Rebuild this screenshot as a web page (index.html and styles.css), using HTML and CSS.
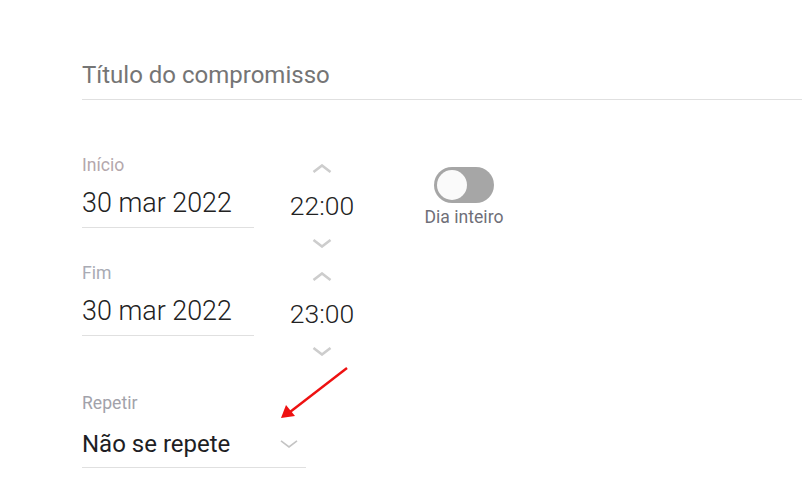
FILE: index.html
```html
<!DOCTYPE html>
<html lang="pt">
<head>
<meta charset="utf-8">
<link rel="stylesheet" href="styles.css">
</head>
<body>
<div class="page">
  <div class="title-field">Título do compromisso</div>

  <div class="when">
    <div class="range">
      <div class="row">
        <div class="date-field">
          <div class="label">Início</div>
          <div class="date">30 mar 2022</div>
        </div>
        <div class="time">
          <svg class="chev" viewBox="0 0 20 9" width="20" height="9"><path d="M1.5 8 L10 1.5 L18.5 8" fill="none" stroke="#cdcdcd" stroke-width="2.6"/></svg>
          <div class="time-value">22:00</div>
          <svg class="chev" viewBox="0 0 20 9" width="20" height="9"><path d="M1.5 1 L10 7.5 L18.5 1" fill="none" stroke="#cdcdcd" stroke-width="2.6"/></svg>
        </div>
      </div>
      <div class="row row2">
        <div class="date-field">
          <div class="label">Fim</div>
          <div class="date">30 mar 2022</div>
        </div>
        <div class="time">
          <svg class="chev" viewBox="0 0 20 9" width="20" height="9"><path d="M1.5 8 L10 1.5 L18.5 8" fill="none" stroke="#cdcdcd" stroke-width="2.6"/></svg>
          <div class="time-value">23:00</div>
          <svg class="chev" viewBox="0 0 20 9" width="20" height="9"><path d="M1.5 1 L10 7.5 L18.5 1" fill="none" stroke="#cdcdcd" stroke-width="2.6"/></svg>
        </div>
      </div>
    </div>
    <div class="allday">
      <div class="switch"><div class="knob"></div></div>
      <div class="allday-label">Dia inteiro</div>
    </div>
  </div>

  <div class="repeat">
    <div class="label">Repetir</div>
    <div class="select">
      <span>Não se repete</span>
      <svg class="chev small" viewBox="0 0 18 8" width="18" height="8"><path d="M1 0.8 L9 7 L17 0.8" fill="none" stroke="#c4c4c4" stroke-width="1.6"/></svg>
    </div>
  </div>

  <svg class="arrow" width="80" height="60" viewBox="0 0 80 60">
    <line x1="71" y1="2" x2="14" y2="46" stroke="#ee1111" stroke-width="2.4"/>
    <polygon points="5,52 10,39 19,50" fill="#ee1111"/>
  </svg>
</div>
</body>
</html>
```

FILE: styles.css
```css
* { box-sizing: border-box; }
html, body { margin: 0; padding: 0; background: #fff; }
body { font-family: Roboto, "Noto Sans", sans-serif; }
.page {
  position: relative;
  padding: 58px 0 0 82px;
  width: 802px;
  height: 491px;
  overflow: hidden;
}
.title-field {
  font-size: 24px;
  line-height: 34px;
  color: #757575;
  height: 42px;
  border-bottom: 1px solid #e0e0e0;
}
.when {
  display: flex;
  margin-top: 53px;
}
.range { display: flex; flex-direction: column; }
.row { display: flex; height: 108px; }
.date-field { width: 172px; }
.label {
  font-size: 17.6px;
  line-height: 24px;
  color: #9e9e9e;
}
.when .label { color: #b4a7ac; }
.row2 .label { color: #a9abb4; }
.date {
  margin-top: 11px;
  font-size: 26.9px;
  font-weight: 300;
  line-height: 30px;
  color: #222;
  height: 40px;
  border-bottom: 1px solid #e0e0e0;
}
.time {
  width: 64px;
  margin-left: 36px;
  display: flex;
  flex-direction: column;
  align-items: center;
}
.chev { display: block; }
.time .chev:first-child { margin-top: 11px; }
.time-value {
  margin-top: 14px;
  font-size: 26.5px;
  font-weight: 300;
  line-height: 38px;
  color: #222;
  height: 52px;
}
.allday {
  margin-left: 70px;
  margin-top: 14px;
  display: flex;
  flex-direction: column;
  align-items: center;
  width: 80px;
}
.switch {
  width: 60px;
  height: 36px;
  border-radius: 18px;
  background: #a6a6a6;
  padding: 3px;
}
.knob {
  width: 30px;
  height: 30px;
  border-radius: 50%;
  background: #fafafa;
}
.allday-label {
  margin-top: 3px;
  font-size: 17.6px;
  line-height: 22px;
  color: #6f6f78;
}
.repeat {
  margin-top: 22px;
  width: 224px;
}
.repeat .label { color: #a2a2aa; }
.select {
  margin-top: 14px;
  display: flex;
  align-items: center;
  justify-content: space-between;
  padding-right: 8px;
  font-size: 24px;
  line-height: 30px;
  color: #1e1e24;
  border-bottom: 1px solid #e0e0e0;
  padding-bottom: 8px;
}
.arrow {
  position: absolute;
  left: 276px;
  top: 366px;
}
```
